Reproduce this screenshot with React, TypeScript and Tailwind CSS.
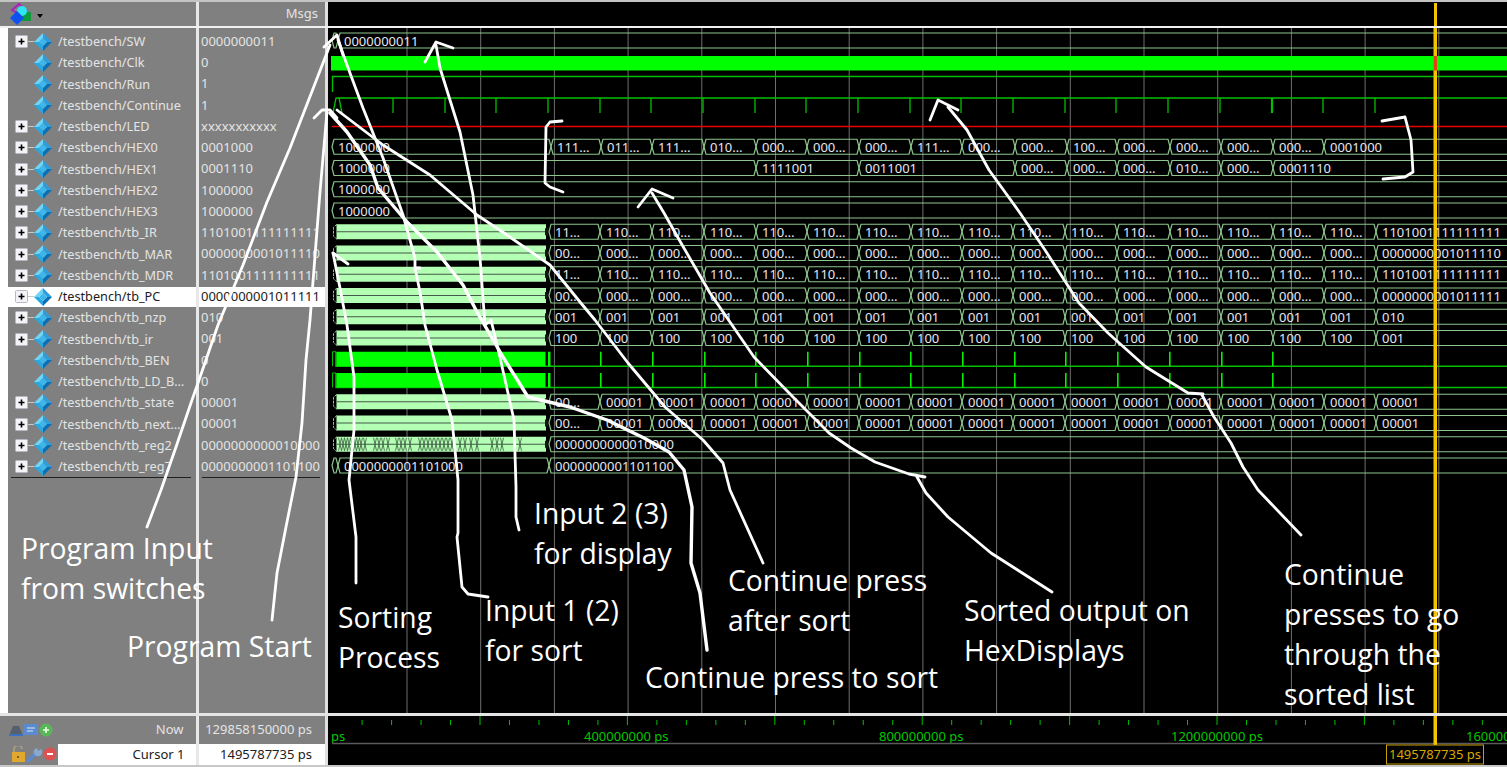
const rows = [
  { name: "/testbench/SW", value: "0000000011", tree: true },
  { name: "/testbench/Clk", value: "0" },
  { name: "/testbench/Run", value: "1" },
  { name: "/testbench/Continue", value: "1" },
  { name: "/testbench/LED", value: "xxxxxxxxxxx", tree: true },
  { name: "/testbench/HEX0", value: "0001000", tree: true },
  { name: "/testbench/HEX1", value: "0001110", tree: true },
  { name: "/testbench/HEX2", value: "1000000", tree: true },
  { name: "/testbench/HEX3", value: "1000000", tree: true },
  { name: "/testbench/tb_IR", value: "1101001111111111", tree: true },
  { name: "/testbench/tb_MAR", value: "0000000001011110", tree: true },
  { name: "/testbench/tb_MDR", value: "1101001111111111", tree: true },
  { name: "/testbench/tb_PC", value: "0000000001011111", tree: true, selected: true },
  { name: "/testbench/tb_nzp", value: "010", tree: true },
  { name: "/testbench/tb_ir", value: "001", tree: true },
  { name: "/testbench/tb_BEN", value: "0" },
  { name: "/testbench/tb_LD_B…", value: "0" },
  { name: "/testbench/tb_state", value: "00001", tree: true },
  { name: "/testbench/tb_next…", value: "00001", tree: true },
  { name: "/testbench/tb_reg2", value: "0000000000010000", tree: true },
  { name: "/testbench/tb_reg7", value: "0000000001101100", tree: true },
];

const END = 1530;
const B = [549, 600, 652, 704, 756, 807, 859, 911, 962, 1013, 1065, 1117, 1170, 1221, 1273, 1324, 1376];
const GRID = Array.from({ length: 15 }, (_, i) => 407 + 73.7 * i);
const PULSES = [600, 652, 704, 755, 807, 859, 910, 962, 1014, 1065, 1117, 1169, 1221, 1272];
const CONTINUE = [393, 445, 496, 548, 600, 651, 703, 755, 806, 858, 910, 961, 1013, 1065, 1116, 1168, 1220, 1272, 1323, 1375];
const REG2_MARKS = [340, 343, 346, 349, 352, 355, 358, 361, 365, 375, 379, 383, 388, 397, 401, 405, 410, 420, 424, 428, 432, 436, 440, 444, 448, 452, 460, 465, 471, 477, 492, 497, 502, 520];

const top = (i: number) => 33 + 21.25 * i;

function Cell({ x0, x1, i, label }: { x0: number; x1: number; i: number; label?: string }) {
  const y = top(i);
  return (
    <g>
      <path
        d={`M${x0} ${y + 7.5}L${x0 + 2} ${y}L${x1 - 2} ${y}L${x1} ${y + 7.5}L${x1 - 2} ${y + 15}L${x0 + 2} ${y + 15}Z`}
        className="fill-none stroke-[#8cc58c]"
        strokeWidth={1.2}
      />
      {label && (
        <text x={x0 + 6} y={y + 12.7} className="fill-[#e6e6f0] text-[13px]">
          {label}
        </text>
      )}
    </g>
  );
}

function Series({ i, labels, xs }: { i: number; labels: string[]; xs: number[] }) {
  return (
    <g>
      {labels.map((label, k) => (
        <Cell key={k} i={i} x0={xs[k]} x1={xs[k + 1] ?? END} label={label} />
      ))}
    </g>
  );
}

// light green block before the sort finishes, transitions too close to draw
function Dense({ i, marks }: { i: number; marks?: number[] }) {
  const y = top(i);
  return (
    <g>
      <rect x={336.5} y={y} width={209.5} height={15} className="fill-[#b3ffb3]" />
      <path d={`M337 ${y + 7.5}H546`} className="stroke-[#44584a]" strokeWidth={1.2} />
      <path
        d={`M337 ${y}L333.5 ${y + 3}V${y + 12}L337 ${y + 15}`}
        className="fill-none stroke-[#8cc58c]"
        strokeDasharray="3 1"
      />
      <rect x={545} y={y + 4} width={3} height={7} className="fill-[#101810]" />
      {marks?.map((x) => (
        <path
          key={x}
          d={`M${x - 1.5} ${y + 1}L${x + 1.5} ${y + 14}M${x + 1.5} ${y + 1}L${x - 1.5} ${y + 14}`}
          className="stroke-[#3a5a3e]"
          strokeWidth={0.8}
        />
      ))}
    </g>
  );
}

function Flat({ i }: { i: number }) {
  const y = top(i);
  return (
    <g>
      <path d={`M336 ${y}V${y + 14.5}H${END}`} className="fill-none stroke-[#00c000]" strokeWidth={1.5} />
      <path d={`M332.5 ${y + 14.5}V${y}H336`} className="fill-none stroke-[#00c000]" />
      <rect x={336.5} y={y} width={209} height={14.5} className="fill-[#00ff00]" />
      <rect x={548} y={y} width={2.5} height={14.5} className="fill-[#00ff00]" />
      {PULSES.map((x) => (
        <rect key={x} x={x} y={y} width={1.6} height={14.5} className="fill-[#00f000]" />
      ))}
    </g>
  );
}

function WavePane() {
  const s = (t: string, n: number) => Array<string>(n).fill(t);
  return (
    <svg viewBox="328 28 1179 685" className="block h-full w-full font-['Noto_Sans',sans-serif]">
      {GRID.map((x) => (
        <path key={x} d={`M${x} 28V713`} className="stroke-[#6e6e6e]" />
      ))}

      {/* SW */}
      <Cell i={0} x0={332} x1={338} />
      <Cell i={0} x0={338} x1={END} label="0000000011" />
      {/* Clk, Run, Continue, LED */}
      <rect x={331} y={56} width={1180} height={14.5} className="fill-[#00ff00]" />
      <path d="M332.5 92V76.5H1510" className="fill-none stroke-[#00c000]" strokeWidth={1.3} />
      <path d="M333 113L336 98L339 98L342 113M339 98H1510" className="fill-none stroke-[#00c000]" strokeWidth={1.3} />
      {CONTINUE.map((x) => (
        <path key={x} d={`M${x} 98V113`} className="stroke-[#00c000]" strokeWidth={x === 1272 ? 2.2 : 1.3} />
      ))}
      <path d="M332 126.5H1510" className="stroke-[#e80000]" strokeWidth={1.5} />

      {/* HEX displays */}
      <Series
        i={5}
        xs={[332, 551, 601, 652, 704, 756, 807, 859, 911, 962, 1015, 1067, 1117, 1170, 1221, 1273, 1324]}
        labels={["1000000", "111…", "011…", "111…", "010…", "000…", "000…", "000…", "111…", "000…", "000…", "100…", "000…", "000…", "000…", "000…", "0001000"]}
      />
      <Series
        i={6}
        xs={[332, 756, 859, 1015, 1067, 1117, 1170, 1221, 1273]}
        labels={["1000000", "1111001", "0011001", "000…", "000…", "000…", "010…", "000…", "0001110"]}
      />
      <Cell i={7} x0={332} x1={END} label="1000000" />
      <Cell i={8} x0={332} x1={END} label="1000000" />

      {/* buses after the sort */}
      {[9, 10, 11, 12, 13, 14, 17, 18].map((i) => (
        <Dense key={i} i={i} />
      ))}
      <Series i={9} xs={B} labels={["11…", ...s("110…", 15), "1101001111111111"]} />
      <Series i={10} xs={B} labels={["00…", ...s("000…", 15), "0000000001011110"]} />
      <Series i={11} xs={B} labels={["11…", ...s("110…", 15), "1101001111111111"]} />
      <Series i={12} xs={B} labels={["00…", ...s("000…", 15), "0000000001011111"]} />
      <Series i={13} xs={B} labels={[...s("001", 16), "010"]} />
      <Series i={14} xs={B} labels={[...s("100", 16), "001"]} />
      <Flat i={15} />
      <Flat i={16} />
      <Series i={17} xs={B} labels={["00…", ...s("00001", 16)]} />
      <Series i={18} xs={B} labels={["00…", ...s("00001", 16)]} />

      <Dense i={19} marks={REG2_MARKS} />
      <Cell i={19} x0={549} x1={END} label="0000000000010000" />
      <Cell i={20} x0={332} x1={338} />
      <Cell i={20} x0={338} x1={549} label="0000000001101000" />
      <Cell i={20} x0={549} x1={END} label="0000000001101100" />

      {/* cursor */}
      <rect x={1433.5} y={28} width={3.5} height={685} className="fill-[#f4c400]" />
      <rect x={1433.5} y={56} width={3.5} height={14.5} className="fill-[#e84010]" />
    </svg>
  );
}

function AxisPane() {
  const ticks = Array.from({ length: 40 }, (_, i) => 362.1 + 29.48 * i);
  return (
    <svg viewBox="328 716 1179 49" className="block h-full w-full font-['Noto_Sans',sans-serif]">
      {ticks.map((x, i) => (
        <path
          key={x}
          d={i % 5 === 4 ? `M${x} 716V725` : `M${x} 720V725`}
          className="stroke-[#00c000]"
        />
      ))}
      <text x={331} y={741} className="fill-[#00c800] text-[13px]">ps</text>
      <text x={584} y={741} className="fill-[#00c800] text-[13px]">400000000 ps</text>
      <text x={879} y={741} className="fill-[#00c800] text-[13px]">800000000 ps</text>
      <text x={1171} y={741} className="fill-[#00c800] text-[13px]">1200000000 ps</text>
      <text x={1466} y={741} className="fill-[#00c800] text-[13px]">160000</text>
      <path d="M332 743.5H1507" className="stroke-[#5a5a5a]" strokeWidth={1.5} />
      <rect x={1433.5} y={716} width={3.5} height={29} className="fill-[#f4c400]" />
      <rect x={1386.5} y={745} width={97} height={19} className="fill-black stroke-[#c8a000]" />
      <text x={1389} y={759} className="fill-[#d8a800] text-[13px]">1495787735 ps</text>
    </svg>
  );
}

function Diamond() {
  return (
    <svg viewBox="0 0 18 18" className="h-[18px] w-[18px] shrink-0">
      <path d="M9 0L18 9L13 9L9 5Z" fill="#2f9ddc" />
      <path d="M9 0L0 9L5 9L9 5Z" fill="#6fd4f6" />
      <path d="M0 9L9 18L9 13L5 9Z" fill="#28a8e2" />
      <path d="M18 9L9 18L9 13L13 9Z" fill="#0b6fb4" />
      <path d="M9 5L13 9L9 13L5 9Z" fill="#3ab8ee" />
    </svg>
  );
}

function Expand() {
  return (
    <svg viewBox="0 0 19 13" className="h-[13px] w-[19px] shrink-0">
      <rect x={0.5} y={0.5} width={12} height={12} rx={1} fill="#f4f4f8" stroke="#b8b8c4" />
      <path d="M3.5 6.5H9.5M6.5 3.5V9.5" stroke="#000" strokeWidth={1.6} />
      <path d="M13 6.5H19" stroke="#c8c8c8" />
    </svg>
  );
}

function Logo() {
  return (
    <svg viewBox="0 0 24 22" className="h-[22px] w-[24px]">
      <path d="M10 1L17 7L10 11L3 7Z" fill="none" stroke="#b020c0" strokeWidth={2} />
      <rect x={11} y={9} width={11} height={9} fill="#109a40" />
      <circle cx={13} cy={8} r={5} fill="#30e4f0" />
      <path d="M8 8L15 15L8 22L1 15Z" fill="#1050f0" />
    </svg>
  );
}

function NowIcons() {
  return (
    <svg viewBox="0 0 50 16" className="h-[16px] w-[50px]">
      <path d="M2 11L5 4H11L14 11V13H2Z" fill="#56606c" />
      <path d="M1 12H15V14H1Z" fill="#3b70c0" />
      <rect x={16} y={2} width={14} height={11} fill="#5a8ad0" />
      <path d="M19 6H27M19 9H25" stroke="#dfe8f8" />
      <circle cx={38} cy={8} r={6.5} fill="#58b858" />
      <path d="M35 8H41M38 5V11" stroke="#eafbe8" strokeWidth={1.6} />
    </svg>
  );
}

function CursorIcons() {
  return (
    <svg viewBox="0 0 46 16" className="h-[16px] w-[46px]">
      <path d="M3 6V4A4 4 0 0 1 11 3" fill="none" stroke="#b0a080" strokeWidth={1.6} />
      <rect x={1} y={6} width={13} height={10} fill="#e0a830" />
      <rect x={6} y={10} width={2} height={2} fill="#8a6010" />
      <path d="M17 15L25 7" stroke="#5a8ad0" strokeWidth={3.5} strokeLinecap="round" />
      <path d="M24 9A4 4 0 0 1 26 2L27 5L30 3A4 4 0 0 1 24 9Z" fill="#8aa8d0" />
      <circle cx={39} cy={8} r={6.5} fill="#e05050" />
      <path d="M36 8H42" stroke="#fff" strokeWidth={2} />
    </svg>
  );
}

const mark = "absolute whitespace-pre text-[28.3px] leading-[40px] text-white font-['Open_Sans',sans-serif]";

export default function App() {
  return (
    <div className="relative flex h-[767px] w-[1507px] flex-col overflow-hidden bg-white font-['Noto_Sans',sans-serif] text-[13px] text-[#e4e4e4]">
      <div className="h-[2px] bg-[#c4c4c4]" />

      {/* header */}
      <div className="flex h-[23.5px]">
        <div className="flex w-[195.5px] items-center gap-[4px] bg-[#808080] pl-[9px]">
          <Logo />
          <span className="mt-[4px] h-0 w-0 border-x-[3.5px] border-t-[4px] border-x-transparent border-t-black" />
        </div>
        <div className="w-[3.5px] bg-[#e8e8e8]" />
        <div className="flex w-[126px] items-center justify-end bg-[#808080] pr-[7px]">Msgs</div>
        <div className="w-[3px] bg-[#e0e0e0]" />
        <div className="relative flex-1 bg-black">
          <div className="absolute right-[70px] top-[1px] h-[22.5px] w-[3.5px] bg-[#f4c400]" />
        </div>
      </div>
      <div className="h-[2.5px] bg-[#f0f0f0]" />

      {/* signals */}
      <div className="flex h-[685px]">
        <div className="w-[8px] bg-white" />
        <div className="w-[187.5px] bg-[#808080] pt-[3px]">
          {rows.map((r) => (
            <div key={r.name} className="flex h-[21.25px] items-center">
              <div
                className={
                  r.selected
                    ? "flex h-[20px] w-full items-center bg-white text-[#1c1c1c]"
                    : "flex h-[20px] w-full items-center"
                }
              >
                <div className="ml-[7px] w-[19px]">{r.tree && <Expand />}</div>
                <Diamond />
                <span className="ml-[6px] text-[12.7px]">{r.name}</span>
              </div>
            </div>
          ))}
          <div className="ml-[3px] mr-[5px] h-px bg-[#202020]" />
        </div>
        <div className="w-[3.5px] bg-[#e8e8e8]" />
        <div className="w-[126px] bg-[#808080] pt-[3px]">
          {rows.map((r) => (
            <div key={r.name} className="flex h-[21.25px] items-center">
              <div
                className={
                  r.selected
                    ? "flex h-[20px] w-full items-center bg-white pl-[2px] text-[#1c1c1c]"
                    : "flex h-[20px] w-full items-center pl-[2px]"
                }
              >
                {r.value}
              </div>
            </div>
          ))}
          <div className="ml-[3px] mr-[5px] h-px bg-[#202020]" />
        </div>
        <div className="w-[3px] bg-[#e0e0e0]" />
        <div className="flex-1 bg-black">
          <WavePane />
        </div>
      </div>
      <div className="h-[3px] bg-[#e4e4e4]" />

      {/* footer */}
      <div className="flex h-[49px]">
        <div className="flex w-[195.5px] flex-col bg-[#808080]">
          <div className="flex h-[27.5px] items-center justify-between pl-[8px] pr-[12px]">
            <NowIcons />
            <span>Now</span>
          </div>
          <div className="flex h-[21.5px]">
            <div className="flex w-[58px] items-center justify-end pr-[1px]">
              <CursorIcons />
            </div>
            <div className="flex flex-1 items-center justify-end bg-white pr-[11px] text-[#202020]">Cursor 1</div>
          </div>
        </div>
        <div className="w-[3.5px] bg-[#e8e8e8]" />
        <div className="flex w-[126px] flex-col">
          <div className="flex h-[27.5px] items-center justify-end bg-[#808080] pr-[13px]">129858150000 ps</div>
          <div className="flex h-[21.5px] items-center justify-end bg-white pr-[13px] text-[#202020]">1495787735 ps</div>
        </div>
        <div className="w-[3px] bg-[#e0e0e0]" />
        <div className="flex-1 bg-black">
          <AxisPane />
        </div>
      </div>
      <div className="flex-1 bg-[#c8c8c8]" />

      {/* hand drawn notes on top of the capture */}
      <svg viewBox="0 0 1507 767" className="pointer-events-none absolute inset-0 h-[767px] w-[1507px]">
        <g fill="none" stroke="#fff" strokeWidth={2.8} strokeLinejoin="round" strokeLinecap="round">
          {/* Program Input */}
          <polyline points="147,527 161,490 176,447 192,400 198,383 218,325 243,265 267,202 290,148 330,45" />
          <polyline points="324,47 337,35 343,55" />
          {/* Input 1 */}
          <polyline points="338,40 347,65 363,108 383,158 403,215 415,258 415,268 420,268 415,268 420,292 425,325 437,370 452,420 458,480 458,533 457,537 462,587 468,594 488,597" />
          {/* Input 2 */}
          <polyline points="425,62 436,42 453,48" />
          <polyline points="436,45 440,68 460,132 473,195 480,258 485,325 491,320 499,353 514,420 516,487 516,517 519,530" />
          {/* Program Start */}
          <polyline points="272,620 277,573 286,527 296,477 302,423 306,360 310,320 320,192 327,112" />
          <polyline points="314,118 322,110 330,110 337,118" />
          {/* Continue press after sort */}
          <polyline points="337,110 383,145 430,175 477,215 507,235 550,265 580,302 595,320 628,363 665,407 703,440 723,463 730,490 763,563" />
          {/* Continue press to sort */}
          <polyline strokeWidth={3.4} points="330,113 347,132 370,165 378,188 407,222 437,252 463,285 477,312 503,357 528,397 570,407 607,420 644,438 669,452 684,470 692,507 691,563 700,593 707,650" />
          {/* Sorting */}
          <polyline points="333,253 348,264" />
          <polyline points="333,253 340,288 347,325 354,377 354,430 349,480 356,537 356,583" />
          {/* Sorted output */}
          <polyline points="1052,592 991,553 948,517 926,493 917,477" />
          <polyline points="925,477 909,474 875,462 851,448 829,433 793,397 754,357 710,293 681,243 664,213 652,193" />
          <polyline points="638,207 652,189 673,198" />
          {/* Continue presses */}
          <polyline points="1301,535 1258,490 1243,467 1231,443 1214,417 1202,395" />
          <polyline points="1203,394 1188,393 1146,367 1108,333 1079,303 1045,250 1020,213 989,170 967,130 948,107" />
          <polyline points="930,120 938,100 958,110" />
          {/* brackets */}
          <polyline points="562,121 550,122 546,127 545,183 550,187 563,192" />
          <polyline points="1382,121 1405,117 1411,140 1413,172 1405,177 1383,179" />
        </g>
      </svg>

      <div className={`${mark} left-[21px] top-[528px]`}>{"Program Input\nfrom switches"}</div>
      <div className={`${mark} left-[127px] top-[626px]`}>Program Start</div>
      <div className={`${mark} left-[338px] top-[597px]`}>{"Sorting\nProcess"}</div>
      <div className={`${mark} left-[485px] top-[590px]`}>{"Input 1 (2)\nfor sort"}</div>
      <div className={`${mark} left-[534px] top-[493px]`}>{"Input 2 (3)\nfor display"}</div>
      <div className={`${mark} left-[728px] top-[560px]`}>{"Continue press\nafter sort"}</div>
      <div className={`${mark} left-[645px] top-[657px]`}>Continue press to sort</div>
      <div className={`${mark} left-[964px] top-[590px]`}>{"Sorted output on\nHexDisplays"}</div>
      <div className={`${mark} left-[1284px] top-[554px]`}>{"Continue\npresses to go\nthrough the\nsorted list"}</div>
    </div>
  );
}
